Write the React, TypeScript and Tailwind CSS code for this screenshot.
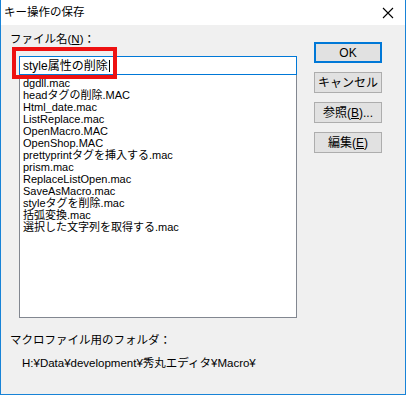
const files = [
  "dgdll.mac",
  "headタグの削除.MAC",
  "Html_date.mac",
  "ListReplace.mac",
  "OpenMacro.MAC",
  "OpenShop.MAC",
  "prettyprintタグを挿入する.mac",
  "prism.mac",
  "ReplaceListOpen.mac",
  "SaveAsMacro.mac",
  "styleタグを削除.mac",
  "括弧変換.mac",
  "選択した文字列を取得する.mac",
];

const ui = { fontFamily: '"Liberation Sans", "Noto Sans CJK JP", sans-serif' };

function Btn({ children, primary }: { children: React.ReactNode; primary?: boolean }) {
  return (
    <div
      className={
        "flex h-[21px] w-[68px] items-center justify-center bg-[#e1e1e1] text-[12px] leading-none text-black " +
        (primary ? "border-2 border-[#0078d7]" : "border border-[#adadad]")
      }
    >
      {children}
    </div>
  );
}

export default function App() {
  return (
    <div
      className="flex h-[395px] w-[406px] flex-col border border-t-0 border-[#1883d7] bg-[#f0f0f0] text-black"
      style={ui}
    >
      <div className="flex h-[25px] shrink-0 items-center justify-between bg-white pl-[3px] pr-[9px]">
        <span className="text-[11.5px] leading-none">キー操作の保存</span>
        <svg width="12" height="12" viewBox="0 0 12 12" className="mr-[2px]">
          <path d="M1 1 L11 11 M11 1 L1 11" stroke="#000" strokeWidth="1.1" />
        </svg>
      </div>

      <div className="flex flex-1">
        <div className="flex w-[297px] flex-col">
          <div className="ml-[9px] mt-[8px] text-[11.5px] leading-[12px]">
            ファイル名(<span className="underline">N</span>)：
          </div>
          <div className="relative ml-[18px] mt-[11px]">
            <div className="flex h-[19px] w-[278px] items-center border border-[#0078d7] bg-white pl-[3px] text-[12px] leading-none">
              style属性の削除<span className="ml-[1px] h-[12px] w-px bg-black" />
            </div>
            <div className="h-[243px] w-[278px] overflow-hidden border border-t-0 border-[#828790] bg-white px-[3px] pt-[2px]">
              {files.map((f) => (
                <div key={f} className="h-[12px] whitespace-nowrap text-[11px] leading-[12px]">
                  {f}
                </div>
              ))}
            </div>
            <div className="absolute left-[-7px] top-[-9px] h-[32px] w-[105px] border-4 border-[#ee1111]" />
          </div>
          <div className="ml-[9px] mt-[16px] text-[11.5px] leading-[12px]">マクロファイル用のフォルダ：</div>
          <div className="ml-[21px] mt-[11px] text-[11.5px] leading-[12px]">
            H:¥Data¥development¥秀丸エディタ¥Macro¥
          </div>
        </div>

        <div className="ml-[16px] mt-[17px] flex flex-col gap-[9px]">
          <Btn primary>OK</Btn>
          <Btn>キャンセル</Btn>
          <Btn>
            参照(<span className="underline">B</span>)...
          </Btn>
          <Btn>
            編集(<span className="underline">E</span>)
          </Btn>
        </div>
      </div>
    </div>
  );
}
